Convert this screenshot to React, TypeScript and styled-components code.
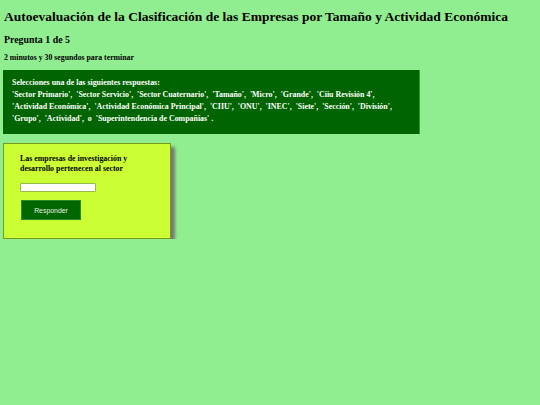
import React from "react";
import styled, { createGlobalStyle } from "styled-components";

const Global = createGlobalStyle`
  html, body { background: #90ee90; }
  body {
    margin: 0;
    padding: 0 3px 0 4px;
    font-family: "Liberation Serif", "Times New Roman", serif;
    color: #000;
  }
`;

const Title = styled.h1`
  font-size: 13.5px;
  font-weight: bold;
  margin: 0;
  padding-top: 8px;
  line-height: 18px;
  white-space: nowrap;
`;

const Sub = styled.h2`
  font-size: 9.9px;
  font-weight: bold;
  margin: 7.6px 0 0 0;
  line-height: 12px;
`;

const Timer = styled.h3`
  font-size: 7.8px;
  font-weight: bold;
  margin: 7.3px 0 0 0;
  line-height: 9px;
`;

const Options = styled.div`
  margin: 8px 0 0 -1px;
  width: 417px;
  box-sizing: border-box;
  background: #006400;
  border-right: 1px solid #2f9a2f;
  color: #fff;
  font-weight: bold;
  font-size: 7.9px;
  line-height: 12px;
  padding: 7px 9px 9px 9px;
`;

const Card = styled.div`
  margin: 9px 0 0 -1px;
  width: 168px;
  height: 96px;
  box-sizing: border-box;
  background: #ccff33;
  border: 1px solid #7a9a1a;
  box-shadow: 4px 4px 3px #777;
  padding: 10.4px 16px 0 16px;
`;

const Question = styled.div`
  font-weight: bold;
  font-size: 7.9px;
  line-height: 10px;
`;

const Answer = styled.input`
  display: block;
  margin: 8.6px 0 0 0;
  width: 76px;
  height: 9px;
  box-sizing: border-box;
  border: 1px solid #9ab84a;
  border-radius: 1px;
  background: #fff;
  padding: 0;
  outline: none;
`;

const Submit = styled.button`
  display: block;
  margin: 8.5px 0 0 1px;
  width: 60px;
  height: 20px;
  background: #006600;
  border: 1px solid #2c8a2c;
  color: #e8f0e0;
  font-family: "Liberation Sans", Arial, sans-serif;
  font-size: 6.9px;
  padding: 0;
  cursor: pointer;
`;

const options = [
  "Sector Primario",
  "Sector Servicio",
  "Sector Cuaternario",
  "Tamaño",
  "Micro",
  "Grande",
  "Ciiu Revisión 4",
  "Actividad Económica",
  "Actividad Económica Principal",
  "CIIU",
  "ONU",
  "INEC",
  "Siete",
  "Sección",
  "División",
  "Grupo",
  "Actividad",
];

export default function App() {
  return (
    <>
      <Global />
      <Title>Autoevaluación de la Clasificación de las Empresas por Tamaño y Actividad Económica</Title>
      <Sub>Pregunta 1 de 5</Sub>
      <Timer>2 minutos y 30 segundos para terminar</Timer>
      <Options>
        Selecciones una de las siguientes respuestas:
        <br />
        {options.map((o) => `'${o}',\u00a0 `).join("")}o&nbsp; 'Superintendencia de Compañías' .
      </Options>
      <Card>
        <Question>Las empresas de investigación y desarrollo pertenecen al sector</Question>
        <Answer type="text" />
        <Submit>Responder</Submit>
      </Card>
    </>
  );
}
